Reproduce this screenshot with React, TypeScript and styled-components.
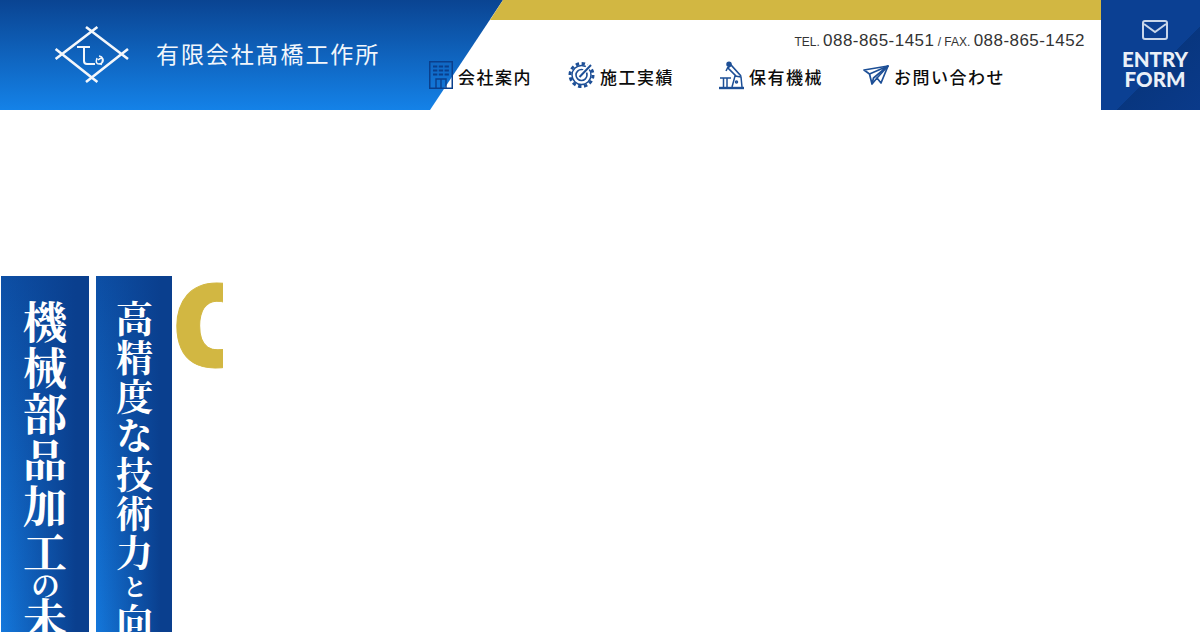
import styled, { createGlobalStyle } from 'styled-components';

const Global = createGlobalStyle`
  html, body {
    margin: 0;
    background: #fff;
    overflow: hidden;
  }
  * {
    box-sizing: border-box;
  }
`;

const Page = styled.div`
  width: 1200px;
  height: 632px;
  overflow: hidden;
  font-family: 'Noto Sans CJK JP', sans-serif;
`;

const Header = styled.header`
  display: flex;
  height: 110px;
`;

const Brand = styled.a`
  flex: 0 0 503px;
  display: flex;
  align-items: center;
  gap: 26px;
  padding-left: 54px;
  background: linear-gradient(180deg, #0a4492 0%, #1482e8 100%);
  clip-path: polygon(0 0, 100% 0, 430px 100%, 0 100%);
`;

const BrandName = styled.span`
  padding-bottom: 5px;
  color: #f2f6fb;
  font-size: 23px;
  font-weight: 400;
  letter-spacing: 1.9px;
  white-space: nowrap;
`;

const Side = styled.div`
  flex: 1;
  margin-left: -73px;
  position: relative;
  display: flex;
  flex-direction: column;
`;

const GoldStrip = styled.div`
  height: 20px;
  background: #d2b742;
  clip-path: polygon(73px 0, 100% 0, 100% 100%, 60px 100%);
`;

const Contact = styled.div`
  margin-top: 10px;
  padding-right: 16px;
  text-align: right;
  height: 22px;
  line-height: 22px;
  color: #333;
  font-family: 'Liberation Sans', Arial, sans-serif;
  font-size: 12px;
  white-space: nowrap;
`;

const Phone = styled.span`
  font-size: 17px;
  letter-spacing: 0.45px;
`;

const Nav = styled.nav`
  display: flex;
  margin-top: 8px;
  margin-left: -1px;
`;

const NavItem = styled.a<{ $width: number }>`
  flex: 0 0 ${p => p.$width}px;
  display: flex;
  align-items: center;
  gap: 5px;
  height: 30px;
  color: #0c0c0c;
  font-size: 17px;
  font-weight: 500;
  letter-spacing: 1.5px;
  white-space: nowrap;
`;

const NavLabel = styled.span`
  padding-top: 3px;
`;

const Entry = styled.a`
  flex: 0 0 99px;
  display: flex;
  flex-direction: column;
  align-items: center;
  padding: 20px 0 0 9px;
  background: linear-gradient(135deg, #0b4093 0%, #0b4093 60%, #08367f 60%, #0a3a8a 100%);
  color: #eaf0f8;
`;

const EntryLabel = styled.span`
  margin-top: 9px;
  font-family: Lato, sans-serif;
  font-size: 20.5px;
  font-weight: 900;
  line-height: 20px;
  text-align: center;
`;

const Hero = styled.section`
  display: flex;
  align-items: flex-start;
  margin-top: 166px;
  padding-left: 1px;
`;

const Banner = styled.div<{ $width: number; $size: number; $pad: number }>`
  flex: 0 0 ${p => p.$width}px;
  height: 360px;
  margin-right: 7px;
  padding-top: ${p => p.$pad}px;
  display: flex;
  align-items: center;
  overflow: hidden;
  background:
    linear-gradient(90deg, transparent 0%, #0a3f8e 85%),
    linear-gradient(180deg, #0d4fa5 0%, #1478dc 100%);
  color: #fff;
  font-family: 'Noto Serif CJK JP', 'Noto Sans CJK JP', serif;
  font-size: ${p => p.$size}px;
  font-weight: 700;
  writing-mode: vertical-rl;
  letter-spacing: 2px;
  line-height: 1;
  white-space: nowrap;
`;

const Small = styled.span<{ $shift: number }>`
  font-size: 0.66em;
  margin-inline-start: ${p => p.$shift}px;
  margin-inline-end: ${p => p.$shift}px;
`;

const GoldLetter = styled.div`
  width: 52px;
  height: 100px;
  margin-left: -8px;
  overflow: hidden;
  color: #d2b742;
  font-family: 'Open Sans', sans-serif;
  font-size: 115px;
  font-weight: 800;
  line-height: 94px;
  -webkit-text-stroke: 1px #d2b742;
`;

const Logo = () => (
  <svg width="76" height="60" viewBox="0 0 76 60" fill="none" stroke="#f4f7fb" strokeWidth="2.6">
    <path d="M1.6 34 43.4 2M32 2 74 34M1.6 24 43.4 57M32 57 74 24" />
    <path d="M23 22H36M30 22V36Q30 39 33 39H41" strokeWidth="2" />
    <path d="M43 33Q41 39 45 39Q50 38 49 34Q47 32 44 35M45 31Q51 32 47 40" strokeWidth="1.5" />
  </svg>
);

const BuildingIcon = () => (
  <svg width="24" height="28" viewBox="0 0 24 28" fill="none" stroke="#0a3f8c">
    <rect x="0.75" y="0.75" width="22.5" height="26.5" strokeWidth="1.5" />
    <path d="M4 5.5H20M4 9.5H20M4 13.5H20" strokeWidth="2.2" strokeDasharray="4.3 1.5" />
    <path d="M7 27V18H17V27M12 18V27" strokeWidth="1.4" />
  </svg>
);

const GearIcon = () => (
  <svg width="27" height="28" viewBox="0 0 27 28" fill="none" stroke="#1d4f96">
    <circle cx="13.5" cy="14" r="9.5" strokeWidth="1.5" />
    <circle cx="13.5" cy="14" r="11.5" strokeWidth="3" strokeDasharray="3.4 2.6" />
    <circle cx="13.5" cy="14" r="5.5" strokeWidth="1.6" />
    <path d="M12 15.5 25 1" strokeWidth="4.5" stroke="#fff" />
    <path d="M11.5 16 23 4" strokeWidth="2" />
  </svg>
);

const RobotIcon = () => (
  <svg width="25" height="29" viewBox="0 0 25 29" fill="none" stroke="#1d4f96" strokeWidth="1.5">
    <path d="M0 27H25" strokeWidth="2.4" />
    <path d="M1 17H12M4.5 17V26M8 17V26" />
    <path d="M13 26 16 15 22 16 23 26" />
    <path d="M22 15 12 4 9 7 17 15" strokeWidth="1.7" />
    <circle cx="10" cy="3.2" r="2" fill="#1d4f96" />
    <path d="M9 6 7 10" />
    <circle cx="17.5" cy="21" r="1" />
  </svg>
);

const PlaneIcon = () => (
  <svg width="26" height="20" viewBox="0 0 26 20" fill="none" stroke="#1d4f96" strokeWidth="1.7" strokeLinejoin="round">
    <path d="M1 5 25 1 18 18 14 13 9 19 6.5 9Z" />
    <path d="M6.5 9 25 1 10.5 13 9 19" />
    <path d="M14 13 25 1" />
  </svg>
);

const EnvelopeIcon = () => (
  <svg width="26" height="20" viewBox="0 0 26 20" fill="none" stroke="#c9d7ea" strokeWidth="2">
    <rect x="1" y="1" width="24" height="18" rx="2" />
    <path d="M2 4 13 12 24 4" />
  </svg>
);

const navItems = [
  { label: '会社案内', icon: <BuildingIcon />, width: 139 },
  { label: '施工実績', icon: <GearIcon />, width: 151 },
  { label: '保有機械', icon: <RobotIcon />, width: 144 },
  { label: 'お問い合わせ', icon: <PlaneIcon />, width: 160 },
];

export default function App() {
  return (
    <Page>
      <Global />
      <Header>
        <Brand>
          <Logo />
          <BrandName>有限会社髙橋工作所</BrandName>
        </Brand>
        <Side>
          <GoldStrip />
          <Contact>
            TEL. <Phone>088-865-1451</Phone> / FAX. <Phone>088-865-1452</Phone>
          </Contact>
          <Nav>
            {navItems.map(item => (
              <NavItem key={item.label} $width={item.width}>
                {item.icon}
                <NavLabel>{item.label}</NavLabel>
              </NavItem>
            ))}
          </Nav>
        </Side>
        <Entry>
          <EnvelopeIcon />
          <EntryLabel>
            ENTRY
            <br />
            FORM
          </EntryLabel>
        </Entry>
      </Header>
      <Hero>
        <Banner $width={88} $size={44} $pad={24}>
          <span>
            機械部品加工<Small $shift={-5}>の</Small>未
          </span>
        </Banner>
        <Banner $width={76} $size={37} $pad={24}>
          <span>
            高精度な技術力<Small $shift={2}>と</Small>向
          </span>
        </Banner>
        <GoldLetter>C</GoldLetter>
      </Hero>
    </Page>
  );
}
